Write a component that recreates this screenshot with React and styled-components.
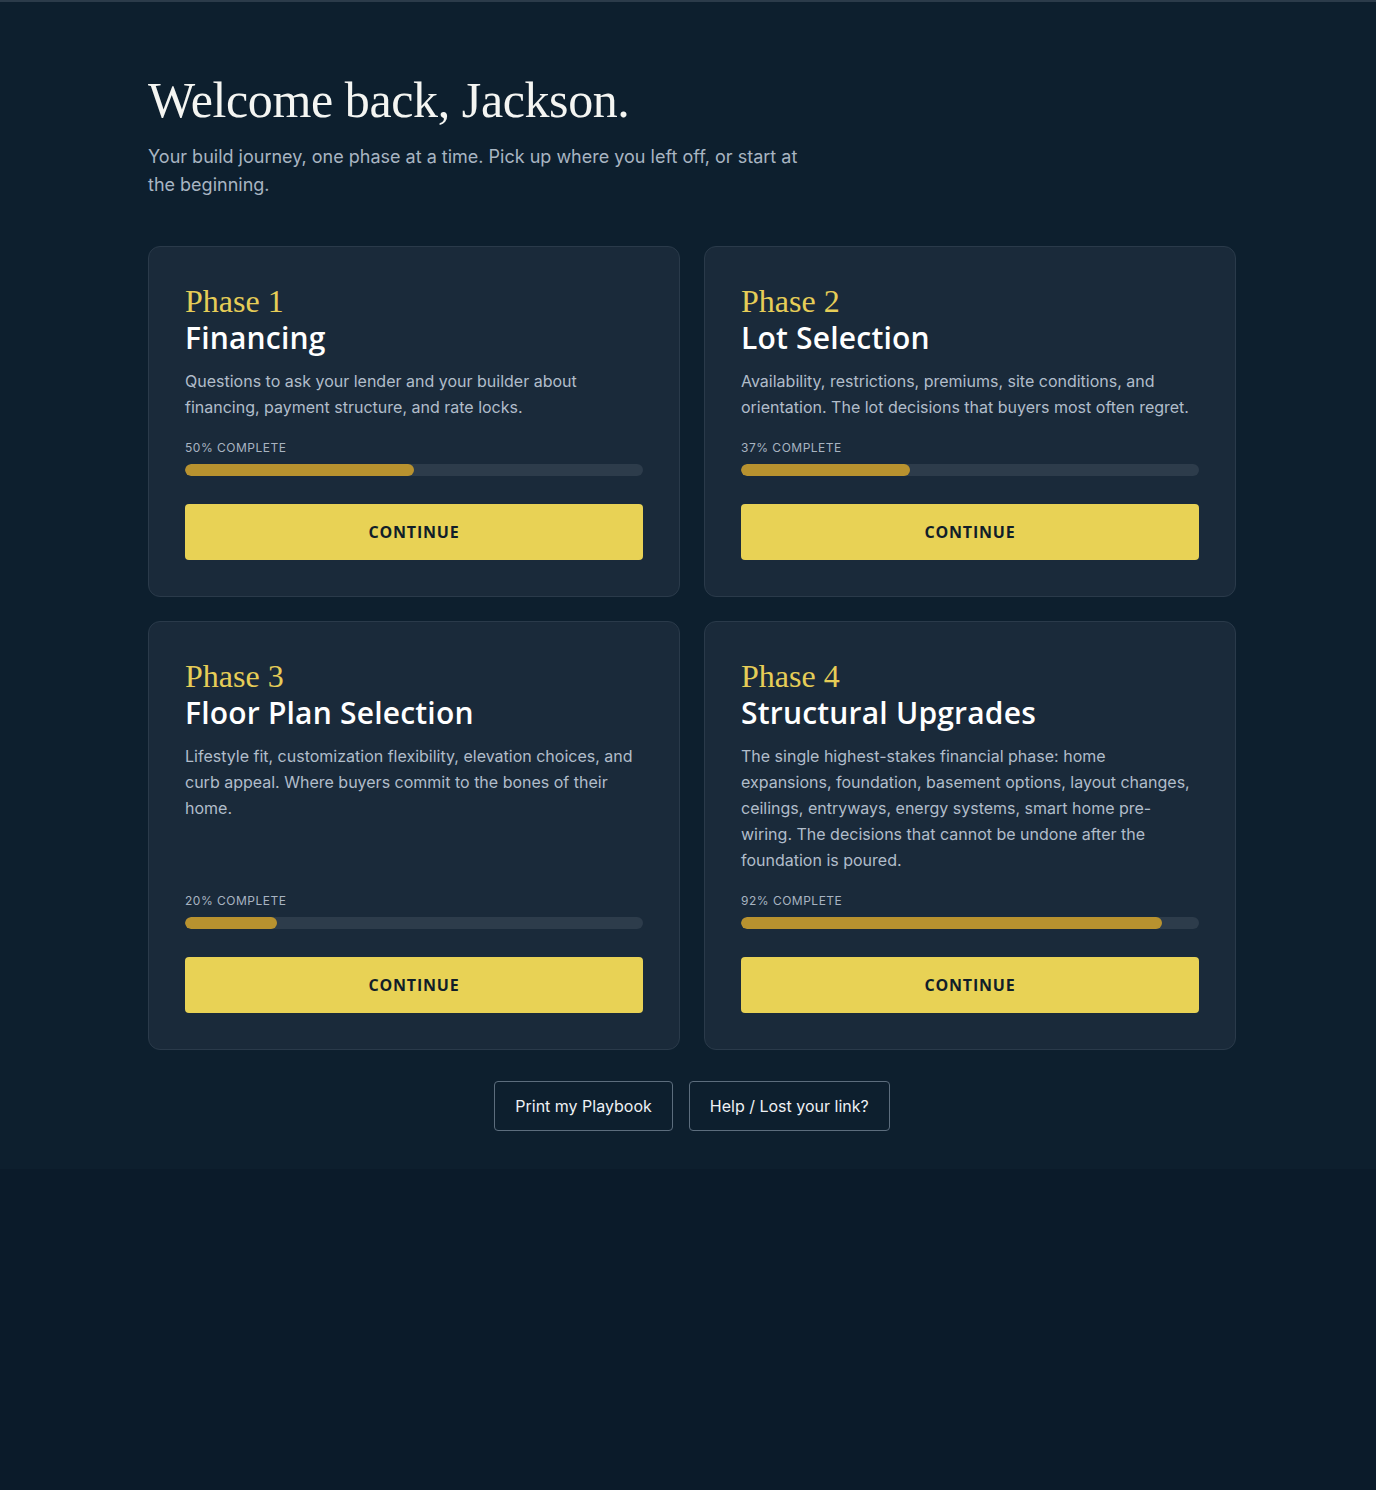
import styled, { createGlobalStyle } from "styled-components";

const Global = createGlobalStyle`
  html, body {
    margin: 0;
    background: #0b1b2a;
  }
  * {
    box-sizing: border-box;
  }
`;

/* page shell */
const Page = styled.div`
  min-height: 1490px;
  background: #0b1b2a;
  border-top: 2px solid #2b3b4a;
  font-family: Inter, "Liberation Sans", sans-serif;
`;

const Main = styled.main`
  background: #0d1f2e;
  padding: 70px 0 38px 8px;
`;

const Inner = styled.div`
  width: 1088px;
  margin: 0 auto;
`;

const Heading = styled.h1`
  margin: 0;
  font-family: "Liberation Serif", "DejaVu Serif", serif;
  font-weight: 400;
  font-size: 50px;
  line-height: 56px;
  letter-spacing: -0.4px;
  color: #f4f5f2;
`;

const Lead = styled.p`
  margin: 15px 0 0;
  max-width: 660px;
  font-size: 18px;
  line-height: 28px;
  color: #a8b5c2;
`;

const Grid = styled.div`
  display: grid;
  grid-template-columns: 1fr 1fr;
  gap: 24px;
  margin-top: 47px;
`;

/* phase card */
const Card = styled.section`
  display: flex;
  flex-direction: column;
  padding: 36px;
  background: #1a2a3a;
  border: 1px solid #2a3a4a;
  border-radius: 12px;
`;

const PhaseLabel = styled.div`
  font-family: "Liberation Serif", "DejaVu Serif", serif;
  font-size: 32px;
  line-height: 36px;
  color: #e6cd57;
`;

const Title = styled.h2`
  margin: 0;
  font-family: "Open Sans", "Liberation Sans", sans-serif;
  font-weight: 600;
  font-size: 30px;
  line-height: 38px;
  letter-spacing: 0.2px;
  color: #ffffff;
`;

const Desc = styled.p`
  flex: 1;
  margin: 11px 0 0;
  font-size: 16px;
  line-height: 26px;
  color: #b1bdca;
`;

const ProgressLabel = styled.div`
  margin-top: 20px;
  font-size: 12px;
  line-height: 16px;
  letter-spacing: 0.5px;
  text-transform: uppercase;
  color: #a8b4c1;
`;

const Track = styled.div`
  height: 12px;
  margin-top: 8px;
  border-radius: 6px;
  background: #2d3c4b;
  overflow: hidden;
`;

const Fill = styled.div`
  height: 100%;
  border-radius: 6px;
  background: #b8922f;
`;

const Continue = styled.button`
  margin-top: 28px;
  height: 56px;
  border: none;
  border-radius: 4px;
  background: #e8d255;
  font-family: "Open Sans", "Liberation Sans", sans-serif;
  font-weight: 700;
  font-size: 16px;
  letter-spacing: 0.8px;
  color: #111e29;
  cursor: pointer;
`;

/* footer actions */
const Actions = styled.div`
  display: flex;
  justify-content: center;
  gap: 16px;
  margin-top: 31px;
`;

const Ghost = styled.button`
  height: 50px;
  padding: 0 20px;
  background: transparent;
  border: 1px solid #5c6d7d;
  border-radius: 4px;
  font-family: Inter, "Liberation Sans", sans-serif;
  font-weight: 400;
  font-size: 16px;
  color: #eef1f4;
  cursor: pointer;
`;

const phases = [
  {
    n: 1,
    title: "Financing",
    text: "Questions to ask your lender and your builder about financing, payment structure, and rate locks.",
    pct: 50,
  },
  {
    n: 2,
    title: "Lot Selection",
    text: "Availability, restrictions, premiums, site conditions, and orientation. The lot decisions that buyers most often regret.",
    pct: 37,
  },
  {
    n: 3,
    title: "Floor Plan Selection",
    text: "Lifestyle fit, customization flexibility, elevation choices, and curb appeal. Where buyers commit to the bones of their home.",
    pct: 20,
  },
  {
    n: 4,
    title: "Structural Upgrades",
    text: "The single highest-stakes financial phase: home expansions, foundation, basement options, layout changes, ceilings, entryways, energy systems, smart home pre-wiring. The decisions that cannot be undone after the foundation is poured.",
    pct: 92,
  },
];

export default function App() {
  return (
    <Page>
      <Global />
      <Main>
        <Inner>
          <Heading>Welcome back, Jackson.</Heading>
          <Lead>
            Your build journey, one phase at a time. Pick up where you left off,
            or start at the beginning.
          </Lead>
          <Grid>
            {phases.map((p) => (
              <Card key={p.n}>
                <PhaseLabel>Phase {p.n}</PhaseLabel>
                <Title>{p.title}</Title>
                <Desc>{p.text}</Desc>
                <ProgressLabel>{p.pct}% complete</ProgressLabel>
                <Track>
                  <Fill style={{ width: `${p.pct}%` }} />
                </Track>
                <Continue>CONTINUE</Continue>
              </Card>
            ))}
          </Grid>
          <Actions>
            <Ghost>Print my Playbook</Ghost>
            <Ghost>Help / Lost your link?</Ghost>
          </Actions>
        </Inner>
      </Main>
    </Page>
  );
}
